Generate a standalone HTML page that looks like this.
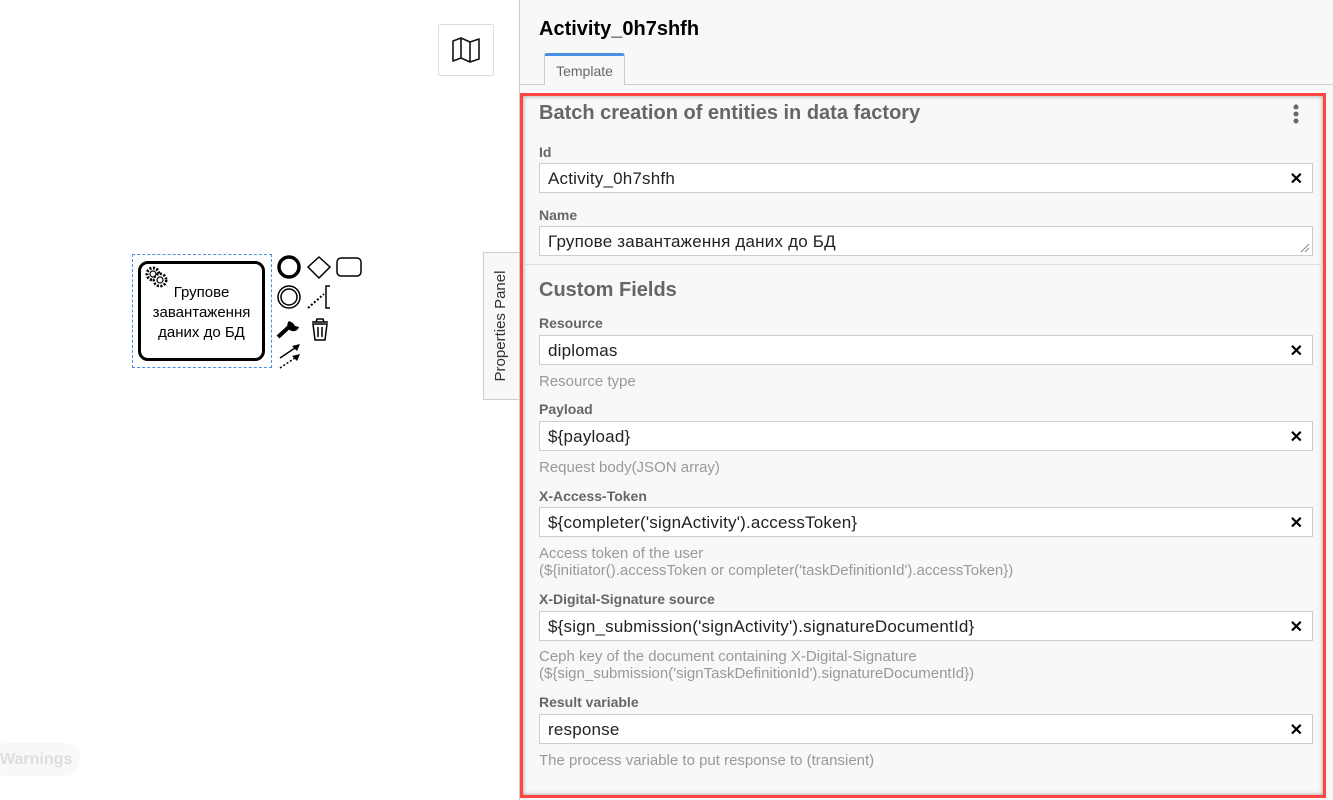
<!DOCTYPE html>
<html><head><meta charset="utf-8"><style>
*{box-sizing:border-box;margin:0;padding:0}
body{width:1333px;height:800px;overflow:hidden;background:#fff;font-family:"Liberation Sans","Noto Sans CJK SC",sans-serif;position:relative}
.a{position:absolute}
.panel{left:519px;top:0;width:814px;height:800px;background:#f8f8f8;border-left:1px solid #ccc}
.lbl{position:absolute;left:539px;font-size:14px;font-weight:bold;color:#666}
.inp{position:absolute;left:539px;width:774px;height:30px;background:#fff;border:1px solid #ccc;font-size:17px;letter-spacing:0.2px;color:#222;padding:5px 0 0 8px}
.inp .x{position:absolute;right:9px;top:5px;font-size:16px;font-weight:bold;color:#000;letter-spacing:0}
.d{position:absolute;left:539px;font-size:15px;color:#999;line-height:17px}
h2{position:absolute;left:539px;font-size:20px;color:#666;font-weight:bold}
</style></head><body>
<div class="a" style="left:438px;top:24px;width:56px;height:52px;border:1px solid #ddd;border-radius:2px;background:#fff"></div>
<svg class="a" style="left:450px;top:36px" width="32" height="28" viewBox="0 0 32 28"><path d="M3 5 L11 2 L20 6 L29 3 L29 23 L20 26 L11 22 L3 25 Z M11 2 L11 22 M20 6 L20 26" fill="none" stroke="#111" stroke-width="1.6" stroke-linejoin="round"/></svg>

<div class="a" style="left:132px;top:254px;width:140px;height:114px;border:1px dashed #4a90e2"></div>
<div class="a" style="left:138px;top:261px;width:127px;height:100px;border:3px solid #000;border-radius:10px;background:#fff"></div>
<svg class="a" style="left:143px;top:265px" width="28" height="24" viewBox="0 0 28 24"><g fill="#fff" stroke="#000" stroke-width="1.2"><circle cx="10" cy="9" r="6" stroke-dasharray="2 1.5" stroke-width="3"/><circle cx="10" cy="9" r="3"/><circle cx="17" cy="15" r="6" stroke-dasharray="2 1.5" stroke-width="3"/><circle cx="17" cy="15" r="5" stroke="none"/><circle cx="17" cy="15" r="3"/></g></svg>
<div class="a" style="left:140px;top:283px;width:123px;text-align:center;font-size:15px;line-height:20px;color:#000">Групове завантаження даних до БД</div>

<svg class="a" style="left:272px;top:252px" width="95" height="120" viewBox="0 0 95 120">
<circle cx="17" cy="15" r="10" fill="none" stroke="#000" stroke-width="3.5"/>
<path d="M47 5 L58 15 L47 26 L36 15 Z" fill="none" stroke="#000" stroke-width="1.5"/>
<rect x="65" y="6" width="24" height="18" rx="4" fill="none" stroke="#000" stroke-width="1.5"/>
<circle cx="17" cy="45" r="11" fill="none" stroke="#000" stroke-width="1.5"/><circle cx="17" cy="45" r="8" fill="none" stroke="#000" stroke-width="1.5"/>
<path d="M36 56 L52 42" stroke="#000" stroke-width="2" stroke-dasharray="2 2"/><path d="M58 34 L54 34 L54 56 L58 56" fill="none" stroke="#000" stroke-width="1.5"/>
<path d="M6 85 L18 74" stroke="#000" stroke-width="4"/><path d="M17 69 a6 6 0 1 0 10 6 l-4 -1 l-2 -3 z" fill="#000"/>
<path d="M40 70 L56 70 M44 70 L45 67 L51 67 L52 70 M41 72 L43 88 L53 88 L55 72 Z M46 75 L46 85 M50 75 L50 85" fill="none" stroke="#000" stroke-width="1.5"/>
<path d="M8 106 L26 94" stroke="#000" stroke-width="1.5"/><path d="M28 92 L20 94 L25 99 Z" fill="#000"/>
<path d="M8 116 L26 104" stroke="#000" stroke-width="1.5" stroke-dasharray="2 2"/><path d="M28 102 L20 104 L25 109 Z" fill="#000"/>
</svg>

<div class="a" style="left:-10px;top:743px;width:90px;height:33px;border-radius:16px;background:#f8f8f8;color:#ddd;font-weight:bold;font-size:16px;padding:8px 0 0 10px">Warnings</div>

<div class="a" style="left:483px;top:252px;width:37px;height:148px;background:#f8f8f8;border:1px solid #ccc;border-right:none"></div>
<div class="a" style="left:428px;top:316px;width:148px;height:20px;transform:rotate(-90deg);text-align:center;font-size:15px;color:#333">Properties Panel</div>

<div class="a panel"></div>
<div class="a" style="left:539px;top:18px;font-size:20px;font-weight:bold;color:#000">Activity_0h7shfh</div>
<div class="a" style="left:520px;top:84px;width:813px;border-top:1px solid #ccc"></div>
<div class="a" style="left:544px;top:53px;width:81px;height:32px;border:1px solid #ccc;border-top:3px solid #4a90e2;border-bottom:none;border-radius:3px 3px 0 0;background:#f8f8f8;font-size:14px;color:#666;text-align:center;padding-top:7px">Template</div>

<div class="a" style="left:520px;top:93px;width:806px;height:705px;border:3px solid #f44;box-shadow:inset 0 0 4px #999"></div>
<h2 style="top:102px">Batch creation of entities in data factory</h2>
<svg class="a" style="left:1292px;top:104px" width="8" height="20"><circle cx="4" cy="3" r="2.5" fill="#666"/><circle cx="4" cy="10" r="2.5" fill="#666"/><circle cx="4" cy="17" r="2.5" fill="#666"/></svg>

<div class="lbl" style="top:144px">Id</div>
<div class="inp" style="top:163px">Activity_0h7shfh<span class="x">✕</span></div>
<div class="lbl" style="top:207px">Name</div>
<div class="inp" style="top:226px">Групове завантаження даних до БД
<svg class="a" style="right:2px;bottom:2px" width="10" height="10"><path d="M1 9 L9 1 M5 9 L9 5" stroke="#888"/></svg></div>
<div class="a" style="left:523px;top:264px;width:800px;border-top:1px solid #ddd"></div>

<h2 style="top:279px">Custom Fields</h2>
<div class="lbl" style="top:315px">Resource</div>
<div class="inp" style="top:335px">diplomas<span class="x">✕</span></div>
<div class="d" style="top:373px">Resource type</div>
<div class="lbl" style="top:401px">Payload</div>
<div class="inp" style="top:421px">${payload}<span class="x">✕</span></div>
<div class="d" style="top:459px">Request body(JSON array)</div>
<div class="lbl" style="top:488px">X-Access-Token</div>
<div class="inp" style="top:507px">${completer('signActivity').accessToken}<span class="x">✕</span></div>
<div class="d" style="top:545px">Access token of the user<br>(${initiator().accessToken or completer('taskDefinitionId').accessToken})</div>
<div class="lbl" style="top:591px">X-Digital-Signature source</div>
<div class="inp" style="top:611px">${sign_submission('signActivity').signatureDocumentId}<span class="x">✕</span></div>
<div class="d" style="top:648px">Ceph key of the document containing X-Digital-Signature<br>(${sign_submission('signTaskDefinitionId').signatureDocumentId})</div>
<div class="lbl" style="top:694px">Result variable</div>
<div class="inp" style="top:714px">response<span class="x">✕</span></div>
<div class="d" style="top:752px">The process variable to put response to (transient)</div>
</body></html>
